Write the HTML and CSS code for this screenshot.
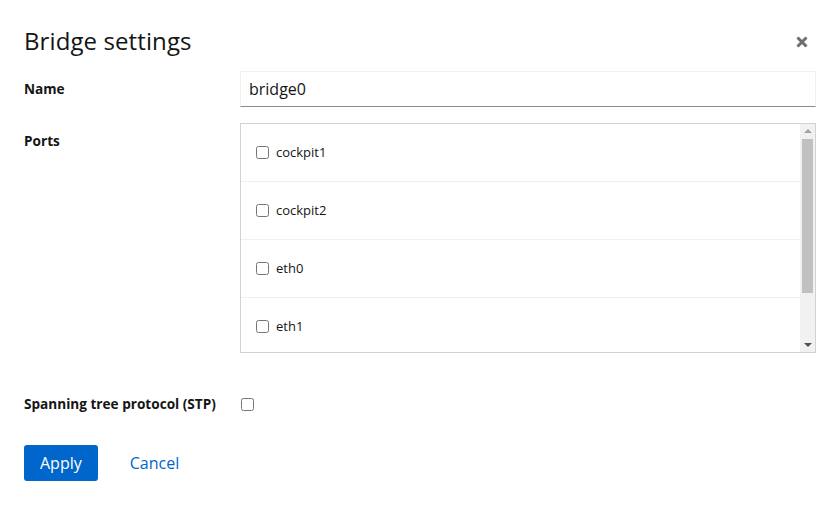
FILE: index.html
```html
<!DOCTYPE html>
<html>
<head>
<meta charset="utf-8">
<link rel="stylesheet" href="styles.css">
</head>
<body>
<div class="modal">
  <header class="modal-header">
    <h1 class="modal-title">Bridge settings</h1>
    <button class="close" aria-label="Close">
      <svg width="12" height="12" viewBox="0 0 12 12"><path d="M1.5 1.5 L10.5 10.5 M10.5 1.5 L1.5 10.5" stroke="#6a6e73" stroke-width="3" stroke-linecap="butt"/></svg>
    </button>
  </header>
  <div class="form">
    <div class="row row-name">
      <label class="label">Name</label>
      <div class="control"><input class="text-input" type="text" value="bridge0"></div>
    </div>
    <div class="row row-ports">
      <label class="label">Ports</label>
      <div class="control">
        <div class="list-box">
          <ul class="list">
            <li class="item"><input type="checkbox"><span>cockpit1</span></li>
            <li class="item"><input type="checkbox"><span>cockpit2</span></li>
            <li class="item"><input type="checkbox"><span>eth0</span></li>
            <li class="item"><input type="checkbox"><span>eth1</span></li>
          </ul>
          <div class="scrollbar">
            <span class="arrow up"></span>
            <div class="track"><div class="thumb"></div></div>
            <span class="arrow down"></span>
          </div>
        </div>
      </div>
    </div>
    <div class="row row-stp">
      <label class="label">Spanning tree protocol (STP)</label>
      <div class="control"><input type="checkbox" class="stp-check"></div>
    </div>
  </div>
  <footer class="footer">
    <button class="btn-primary">Apply</button>
    <button class="btn-link">Cancel</button>
  </footer>
</div>
</body>
</html>
```
FILE: styles.css
```css
* { box-sizing: border-box; }
html, body { margin: 0; padding: 0; background: #fff; }
body { font-family: "Open Sans", "Liberation Sans", sans-serif; color: #151515; }
.modal { width: 840px; height: 505px; padding: 24px 24px 0 24px; }
.modal-header { display: flex; justify-content: space-between; align-items: center; height: 34px; margin-top: 0; }
.modal-title { margin: 0; font-weight: 400; font-size: 24px; line-height: 34px; letter-spacing: 0.1px; }
.close { background: none; border: 0; padding: 0; margin-right: 8px; width: 12px; height: 12px; display: flex; margin-top: 1px; }
.form { margin-top: 13px; display: flex; flex-direction: column; }
.row { display: flex; }
.label { width: 216px; font-size: 13.6px; font-weight: 700; flex: none; }
.control { flex: 1; }
.row-name .label { line-height: 36px; }
.text-input { width: 576px; height: 36px; border: 1px solid #f0f0f0; border-bottom: 1px solid #8a8d90; font-family: inherit; font-size: 16px; color: #151515; padding: 0 8px; outline: none; }
.row-ports { margin-top: 16px; }
.row-ports .label { line-height: 36px; }
.list-box { width: 576px; height: 230px; border: 1px solid #d2d2d2; display: flex; overflow: hidden; }
.list { list-style: none; margin: 0; padding: 0; flex: 1; }
.item { height: 58px; border-bottom: 1px solid #f0f0f0; display: flex; align-items: center; padding-left: 12px; font-size: 13px; padding-bottom: 1px; }
.item input { margin: 0 7px 0 3px; width: 13px; height: 13px; }
.scrollbar { width: 15px; background: #f1f1f1; display: flex; flex-direction: column; align-items: center; }
.arrow { width: 0; height: 0; border-left: 4px solid transparent; border-right: 4px solid transparent; margin: 5px 0; }
.arrow.up { border-bottom: 4px solid #a3a3a3; }
.arrow.down { border-top: 4px solid #505050; }
.track { flex: 1; width: 100%; display: flex; justify-content: center; }
.thumb { width: 11px; height: 154px; margin-top: 1px; background: #c1c1c1; }
.row-stp { margin-top: 33px; }
.row-stp .label { line-height: 36px; }
.row-stp .control { display: flex; align-items: center; }
.stp-check { margin: 0 0 0 1px; width: 13px; height: 13px; }
.footer { display: flex; align-items: center; margin-top: 23px; gap: 16px; }
.btn-primary { background: #0066cc; color: #fff; border: 0; border-radius: 3px; height: 36px; padding: 0 16px; font-family: inherit; font-size: 16px; }
.btn-link { background: none; border: 0; color: #0066cc; font-family: inherit; font-size: 16px; padding: 0 16px; height: 36px; }
```
